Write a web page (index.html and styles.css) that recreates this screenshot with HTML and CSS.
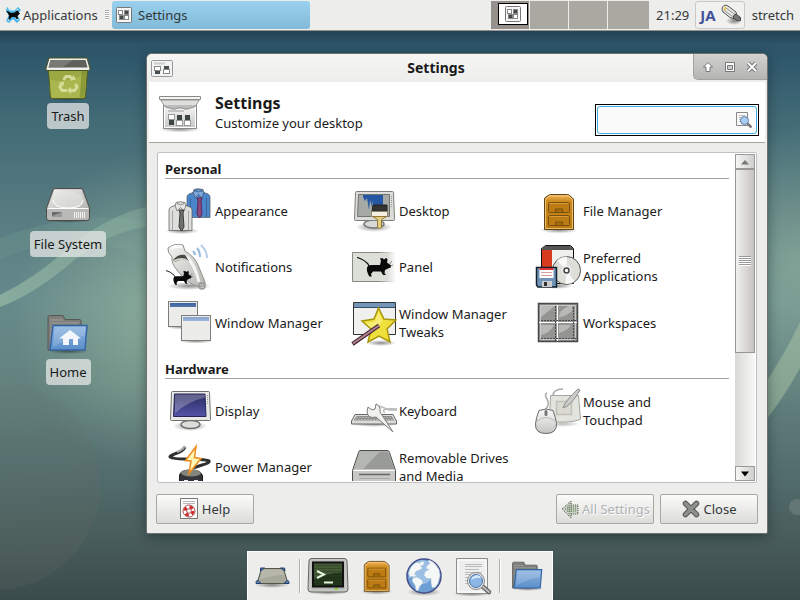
FILE: index.html
```html
<!DOCTYPE html>
<html lang="en">
<head>
<meta charset="utf-8">
<title>Settings</title>
<link rel="stylesheet" href="styles.css">
</head>
<body>
<svg class="defs" width="0" height="0" aria-hidden="true">
  <defs>
    <linearGradient id="silver" x1="0" y1="0" x2="0" y2="1"><stop offset="0" stop-color="#fafafa"/><stop offset="1" stop-color="#c4c4c2"/></linearGradient>
    <linearGradient id="metal" x1="0" y1="0" x2="1" y2="1"><stop offset="0" stop-color="#f4f4f2"/><stop offset="1" stop-color="#b4b6b0"/></linearGradient>
    <linearGradient id="blue" x1="0" y1="0" x2="0" y2="1"><stop offset="0" stop-color="#8db4e0"/><stop offset="1" stop-color="#5b8fcb"/></linearGradient>
    <linearGradient id="wood" x1="0" y1="0" x2="0" y2="1"><stop offset="0" stop-color="#f0b45c"/><stop offset=".2" stop-color="#cf8a1c"/><stop offset="1" stop-color="#bd7a12"/></linearGradient>
    <linearGradient id="screen" x1="0" y1="0" x2="0" y2="1"><stop offset="0" stop-color="#2b2b60"/><stop offset="1" stop-color="#5454a8"/></linearGradient>
    <linearGradient id="titleblue" x1="0" y1="0" x2="0" y2="1"><stop offset="0" stop-color="#3e649e"/><stop offset="1" stop-color="#9db6da"/></linearGradient>
    <radialGradient id="shade"><stop offset="0" stop-color="#000" stop-opacity=".45"/><stop offset="1" stop-color="#000" stop-opacity="0"/></radialGradient>
    <symbol id="i-folder" viewBox="0 0 48 48">
      <ellipse cx="24" cy="41" rx="21" ry="3" fill="url(#shade)"/>
      <path d="M4 40V7.500Q4 5.500 5.500 5.500H19l2 4h14.500q1.500 0 1.500 1.500V40z" fill="#7d7d7a" stroke="#565654"/>
      <path d="M6 10h13M6 13h29M6 16h5M6 19h4M6 22h4M6 25h4M6 28h3M6 31h3M6 34h3" stroke="#a2a29e"/>
      <path d="M9 15.500h34L41 40H6z" fill="url(#blue)" stroke="#3465a4" stroke-width="1.500"/>
      <path d="M10.500 17h31l-.8 9Q21 29 9 37z" fill="#fff" opacity=".16"/>
    </symbol>
    <symbol id="i-cabinet" viewBox="0 0 48 48">
      <ellipse cx="26" cy="43" rx="19" ry="3.500" fill="url(#shade)"/>
      <path d="M11.500 42.500V12q0-1 1-1.700L16 8q.7-.5 1.500-.5h17q1 0 1.700.6l3.300 2.900q1 .8 1 2v29.500z" fill="url(#wood)" stroke="#5f4415"/>
      <path d="M12.500 41.500V12.500l4-3.500h19l4 3.500v29z" fill="none" stroke="#f8d190" opacity=".75"/>
      <g fill="#bd7b14" stroke="#76500e"><rect x="15.500" y="15.500" width="21" height="10" rx="1"/><rect x="15.500" y="28.500" width="21" height="10" rx="1"/><path d="M22.500 25v-3h7v3M22.500 38v-3h7v3" fill="#a96b0c"/></g>
      <path d="M16.500 16.500h19M16.500 29.500h19" stroke="#db9a38"/>
    </symbol>
    <symbol id="i-rat" viewBox="0 0 36 21">
      <path d="M0 .5Q6 2 11 7l1 2" fill="none" stroke="#0a0a0a" stroke-width="1.200"/>
      <path d="M10.500 9.500Q11 8 14 8t9 0l1-4-1-2.500 2.500-.5 1.500 1.500L29 1l1.500 1-.5 3.500 4 3-.3 2-2.700 1-3 1.500-.5 3 1.500 2h-3l-2-3.500h-8L14 17l.8 2.500h-2.500L11 17l-1-3q-.5-3 .5-4.500z" fill="#0a0a0a"/>
      <path d="M32 8l3-4M33 9l3-1" stroke="#222" stroke-width=".5"/>
    </symbol>
    <symbol id="i-shirt" viewBox="0 0 25 31">
      <path d="M8 1.500Q12 0 17 1.500l1 3 4 1.500q2 1 2 3v20.500H1V9q0-2 2-3l4-1.500z" fill="currentColor" stroke="#555" stroke-opacity=".7"/>
      <path d="M4.500 10v19M20.500 10v19" stroke="#222" stroke-opacity=".3"/>
      <path d="M7 4l2 6 3.500-3.500L16 10l2-6M9 2.500q3.500 3 7 0" fill="#fff" fill-opacity=".28" stroke="#333" stroke-opacity=".5"/>
    </symbol>
  </defs>
</svg>

<svg class="wallpaper" viewBox="0 0 800 600" preserveAspectRatio="none" aria-hidden="true">
  <defs>
    <linearGradient id="sky" x1="0" y1="0" x2="0" y2="1">
      <stop offset="0" stop-color="#294b60"/><stop offset=".09" stop-color="#2e566b"/><stop offset=".2" stop-color="#426b76"/><stop offset=".34" stop-color="#55797f"/><stop offset=".5" stop-color="#668a8b"/><stop offset=".64" stop-color="#63827f"/><stop offset=".77" stop-color="#546f70"/><stop offset=".9" stop-color="#485c5b"/><stop offset="1" stop-color="#3a4b4c"/>
    </linearGradient>
    <radialGradient id="glow"><stop offset="0" stop-color="#a4c4a6" stop-opacity=".6"/><stop offset="1" stop-color="#9cbca2" stop-opacity="0"/></radialGradient>
    <linearGradient id="disc" x1="0" y1="0" x2="1" y2="1"><stop offset="0" stop-color="#6d7f74" stop-opacity=".1"/><stop offset="1" stop-color="#66685f" stop-opacity=".22"/></linearGradient>
    <linearGradient id="dropshade" x1="0" y1="0" x2="0" y2="1"><stop offset="0" stop-color="#123" stop-opacity=".35"/><stop offset="1" stop-color="#123" stop-opacity="0"/></linearGradient>
    <linearGradient id="ribbon"><stop offset="0" stop-color="#96bba6" stop-opacity=".7"/><stop offset="1" stop-color="#96bba6" stop-opacity=".3"/></linearGradient>
  </defs>
  <rect width="800" height="600" fill="url(#sky)"/>
  <ellipse cx="160" cy="310" rx="150" ry="160" fill="url(#glow)"/>
  <ellipse cx="800" cy="265" rx="130" ry="140" fill="url(#glow)" opacity=".8"/>
  <path d="M0 238Q80 208 147 222v40Q80 222 0 260z" fill="#90b3a4" opacity=".15"/>
  <path d="M0 295Q35 278 66 250 110 212 160 204v21Q110 228 66 267 32 295 0 307z" fill="url(#ribbon)"/>
  <path d="M740 420Q780 365 800 322v46Q780 405 750 440z" fill="#a9c4a6" opacity=".5"/>
  <circle cx="-5" cy="485" r="105" fill="url(#disc)"/>
  <circle cx="797" cy="507" r="8" fill="#8a9c98" opacity=".35"/>
  <rect y="30" width="800" height="14" fill="url(#dropshade)"/>
</svg>

<header class="panel">
  <button class="appmenu" type="button">
    <svg width="16" height="16" viewBox="0 0 16 16" aria-hidden="true"><path d="M2 0l4 3 3 1 4-4 3 3-4 4 3 6-3 3-4-4-4 4-3-2 3-6-3-4z" fill="#46b4e6"/><path d="M3 1l3 3M13 13l-3-3M13 2l-2 3M3 14l2-3" stroke="#b6e6fa" stroke-width="1.500"/><path d="M1 4q3 0 5 2l4-.5L11 4l2-.5.5 1.500L15 6.500 12.500 9l.5 3h-1.500L10 10H6.500L5 12.500H3.500L4 8.500Q3 6 1 4z" fill="#0a0a0a"/></svg>
    Applications
  </button>
  <span class="grip"></span>
  <button class="task" type="button">
    <svg width="16" height="16" viewBox="0 0 16 16" aria-hidden="true"><rect x=".5" y=".5" width="15" height="15" rx="1" fill="#f6f6f6" stroke="#777"/><g stroke="#888"><rect x="2.500" y="3.500" width="4" height="4" fill="#fff"/><rect x="8.500" y="3.500" width="4" height="4" fill="#43484a"/><rect x="3.500" y="8.500" width="4" height="4" fill="#43484a"/><rect x="8.500" y="8.500" width="4" height="4" fill="#fff"/></g></svg>
    Settings
  </button>
  <div class="pager">
    <span class="space current"><span class="mini"><svg width="16" height="16" viewBox="0 0 16 16" aria-hidden="true"><rect x=".5" y=".5" width="15" height="15" rx="1" fill="#f6f6f6" stroke="#777"/><g stroke="#888"><rect x="2.500" y="3.500" width="4" height="4" fill="#fff"/><rect x="8.500" y="3.500" width="4" height="4" fill="#43484a"/><rect x="3.500" y="8.500" width="4" height="4" fill="#43484a"/><rect x="8.500" y="8.500" width="4" height="4" fill="#fff"/></g></svg></span></span>
    <span class="space"></span><span class="space"></span><span class="space"></span>
  </div>
  <span class="clock">21:29</span>
  <div class="tray">
    <b>JA</b>
    <svg width="22" height="22" viewBox="0 0 22 22" aria-hidden="true"><ellipse cx="14" cy="17" rx="8" ry="4" fill="url(#shade)"/><path d="M2 5q0-2 2-3.500 2-1 4 .5l8 6 1 5-3 2-4-1.500L3 8q-1-1.500-1-3z" fill="#e6e6e0" stroke="#555"/><path d="M3.500 6l9 6.500M6 4l9 6.500" stroke="#999"/><path d="M13 14q0-3 3-4l4.500 3.500v3l-3 .5z" fill="#777" stroke="#444"/><path d="M4 3.500l2-1v3l-2 1z" fill="#f1c84a"/></svg>
  </div>
  <span class="user">stretch</span>
</header>

<main class="desktop">
  <nav class="shortcuts">
    <a href="#trash">
      <svg width="48" height="48" viewBox="0 0 48 48" aria-hidden="true">
        <ellipse cx="24" cy="43.500" rx="22" ry="3.500" fill="url(#shade)"/>
        <path d="M4.500 15h39l-2 27q-.2 2.500-2.500 2.500H8.500Q6.500 44.500 6.300 42z" fill="#a9b84e" stroke="#55601a"/>
        <path d="M38 17h4.500l-2 25q-.3 1.500-2 1.500h-3z" fill="#7f8d2c" opacity=".7"/><path d="M7 26Q24 30 42 19v-2H6z" fill="#7d8c30" opacity=".35"/>
        <path d="M5 4h38l3 10.500q.3 2-1.500 2H3Q1.500 16.500 2 14.500z" fill="#eef0ec" stroke="#4b5220"/>
        <path d="M6.500 6h35l2 7.500h-39z" fill="#5f605c"/><path d="M6.500 6h22l-10 7.500h-14z" fill="#858682" opacity=".7"/>
        <g fill="none" stroke="#d3dc98" stroke-width="3"><path d="M19.500 26l2.500-3.500h4l2.500 3M17.500 29l-1.500 4 2 3.500h5M27 36.500h3.500L33 33l-1.500-3"/></g><g fill="#d3dc98"><path d="M26 26.500l6-1-2.500-4.500zM20 27.500l-5 1 4.500 4zM27 33v7l-4-3.500z"/></g>
      </svg>
      <span>Trash</span>
    </a>
    <a href="#filesystem">
      <svg width="48" height="48" viewBox="0 0 48 48" aria-hidden="true">
        <ellipse cx="24" cy="38" rx="24" ry="3" fill="url(#shade)"/>
        <path d="M10 6.500h27q1.500 0 2 1.500l6.500 18v10q0 2.500-2.500 2.500H5q-2.500 0-2.500-2.500V26L9 8q.4-1.500 1-1.500z" fill="#b9b9b7" stroke="#4c4c4a"/>
        <path d="M10.500 7.500h26.500l7.500 19h-41z" fill="url(#metal)"/><path d="M9 18Q10 11 24 10t15 8-15 8T9 18z" fill="#e2e2e0" opacity=".6"/><path d="M9 18q1 8 15 8t15-8" fill="none" stroke="#fff"/>
        <path d="M3.500 26.500h41" stroke="#fff"/><path d="M8 30h10v5H8z" fill="#999"/><path d="M8 30h10l-10 4z" fill="#6a6a6a"/><path d="M30.500 30v6M32.500 30v6M34.500 30v6M36.500 30v6M38.500 30v6M40.500 30v6" stroke="#f2f2f0"/>
      </svg>
      <span>File System</span>
    </a>
    <a href="#home">
      <svg width="48" height="48" viewBox="0 0 48 48" aria-hidden="true"><use href="#i-folder"/><path d="M26 20L37 28.500h-3V35h-5v-6h-4v6h-6v-6.500h-4z" fill="#f3f7fc"/></svg>
      <span>Home</span>
    </a>
  </nav>

  <section class="window">
    <div class="titlebar">
      <svg class="menuicon" width="22" height="18" viewBox="0 0 22 18" aria-hidden="true"><rect x=".5" y=".5" width="21" height="16" rx="1" fill="#f2f2f2" stroke="#999"/><path d="M3 3.500h11" stroke="#ccc" stroke-width="2"/><g stroke="#888"><rect x="3.500" y="6.500" width="6" height="4" fill="#fff"/><path d="M4 11h5v3H4z" fill="#444c4e" stroke="none"/><rect x="12.500" y="9.500" width="6" height="4" fill="#fff"/><path d="M13 6h5v3h-5z" fill="#444c4e" stroke="none"/></g></svg>
      <h1>Settings</h1>
      <div class="controls">
        <button type="button" aria-label="Roll up"><svg width="12" height="12" viewBox="0 0 12 12"><path d="M6 1.500L10.500 6H8v4.500H4V6H1.500z" fill="#fff" stroke="#777"/></svg></button>
        <button type="button" aria-label="Maximize"><svg width="12" height="12" viewBox="0 0 12 12"><path d="M1.500 1.500h9v9h-9z" fill="#fff" stroke="#777"/><path d="M3.500 4.500h5v4h-5z" fill="#ccc" stroke="#777"/></svg></button>
        <button type="button" aria-label="Close window"><svg width="12" height="12" viewBox="0 0 12 12"><path d="M2 2l8 8M10 2l-8 8" stroke="#777" stroke-width="4"/><path d="M2 2l8 8M10 2l-8 8" stroke="#fff" stroke-width="2"/></svg></button>
      </div>
    </div>

    <div class="banner">
      <svg width="48" height="48" viewBox="0 0 48 48" aria-hidden="true">
        <ellipse cx="23" cy="41" rx="21" ry="3.500" fill="url(#shade)"/>
        <path d="M6.500 16h33v24.500h-33z" fill="url(#silver)" stroke="#8a8a88"/><path d="M7.500 17h31v22.500h-31z" fill="none" stroke="#fff"/>
        <path d="M3.500 11.500h39L38.500 18Q36 20 33 20l-2 1h-4l-1-1h-6l-1 1h-4l-2-1q-4 0-5.500-2z" fill="#bdbdbb" stroke="#8a8a88"/><path d="M5 13h36l-2 4H7z" fill="#dededc"/>
        <path d="M2.500 8.500h41v3h-41z" fill="#f4f4f2" stroke="#8a8a88"/>
        <path d="M11 23h16" stroke="#c2c2c2" stroke-width="2"/>
        <g stroke="#999" fill="#fff"><path d="M12 32h5v5h-5zM20 27h5v5h-5zM28 27h5v5h-5z" fill="#3e4446" stroke="none"/><rect x="11.500" y="26.500" width="6" height="5"/><rect x="19.500" y="32.500" width="6" height="5"/><rect x="27.500" y="32.500" width="6" height="5"/></g>
      </svg>
      <div class="heading"><h2>Settings</h2><p>Customize your desktop</p></div>
      <div class="search">
        <input type="text" aria-label="Search settings">
        <svg width="16" height="16" viewBox="0 0 16 16" aria-hidden="true"><path d="M.5.500h11v13H.5z" fill="#fafafa" stroke="#888"/><path d="M3 3.500h6M3 5.500h5M3 7.500h3M3 9.500h2" stroke="#bbb"/><path d="M11.500 11.500l4 4" stroke="#777" stroke-width="2.500"/><circle cx="8.500" cy="8.500" r="4" fill="#a9cdf2" stroke="#5d7ea8"/></svg>
      </div>
    </div>

    <div class="listframe">
      <div class="list">
        <section>
          <h3>Personal</h3>
          <div class="grid">
            <button type="button"><svg viewBox="0 0 48 48"><ellipse cx="17" cy="44" rx="17" ry="3" fill="url(#shade)"/><use href="#i-shirt" x="21" y="1" width="25" height="31" color="#4a86cc"/><path d="M32 11h5l-1 3 1 13-2.500 4-2.500-4 1-13z" fill="#8a4a80" stroke="#5c2a58"/><use href="#i-shirt" x="3" y="14" width="25" height="31" color="#dededc"/><path d="M14 23h5l-1 3 1 14-2.500 4-2.500-4 1-14z" fill="#6e726c" stroke="#3a3c38"/></svg><span>Appearance</span></button>
            <button type="button"><svg viewBox="0 0 48 48"><ellipse cx="25" cy="40" rx="18" ry="5" fill="url(#shade)"/><ellipse cx="25" cy="37" rx="10" ry="4" fill="#d8d8d6" stroke="#777" stroke-width="1.500"/><path d="M7.500 4.500h36q1 0 1 1l1 27q0 1-1 1h-38q-1 0-1-1l1-27q0-1 1-1z" fill="#dcdcda" stroke="#7c7e7a"/><path d="M9.500 7.500h31v22h-32z" fill="#a6aaa6" stroke="#70746e"/><path d="M14 8h20v11H24v-6l-1 7-2-7-1 10-2-12-2 3-2-4z" fill="#2456a4"/><path d="M42.500 9v12" stroke="#999" stroke-dasharray="1 1"/><path d="M24 18h14v7H23z" fill="#333" stroke="#222"/><path d="M22.500 24.500h16v5h-16z" fill="#f3efe2" stroke="#8c8468"/><path d="M23.500 29.500h14l-5 3v8q-2 2-4 0v-8z" fill="#e4cc84" stroke="#937a34"/></svg><span>Desktop</span></button>
            <button type="button"><svg viewBox="0 0 48 48"><use href="#i-cabinet"/></svg><span>File Manager</span></button>
            <button type="button"><svg viewBox="0 0 48 48"><ellipse cx="24" cy="43" rx="22" ry="4" fill="url(#shade)"/><path d="M3 5Q9 0 18 2l2 6q10 6 13 14l7 17q1 5-5 5-13-3-23-17Q6 20 7 14 2 9 3 5z" fill="url(#metal)" stroke="#8d8f89"/><path d="M6 5q6-3 11-1M22 14q8 8 12 25" fill="none" stroke="#fff" stroke-width="3" opacity=".8"/><path d="M8 17q5-6 12-5l4 6q-8-3-14 1z" fill="#444a42"/><path d="M9 18q8-4 14 0" stroke="#cfd1c9" fill="none" stroke-width="2"/><circle cx="37" cy="43" r="3" fill="none" stroke="#999" stroke-width="1.500"/><g fill="none" stroke="#96b8e0" stroke-width="2"><path d="M28 8q2 2 2 4"/><path d="M32 5q3 3 3 9"/><path d="M36 2q6 6 6 13" stroke="#b7cdea"/></g><use href="#i-rat" x="1" y="27" width="27" height="16"/></svg><span>Notifications</span></button>
            <button type="button"><svg viewBox="0 0 48 48"><defs><linearGradient id="fade"><stop offset=".8" stop-color="#dcded8"/><stop offset="1" stop-color="#fff"/></linearGradient><linearGradient id="fadeline"><stop offset=".6" stop-color="#888a85"/><stop offset="1" stop-color="#fff"/></linearGradient></defs><path d="M47 9.500H3.500v29H47" fill="url(#fade)" stroke="url(#fadeline)"/><use href="#i-rat" x="8" y="14" width="36" height="21"/></svg><span>Panel</span></button>
            <button type="button"><svg viewBox="0 0 48 48"><ellipse cx="24" cy="43" rx="15" ry="3" fill="url(#shade)"/><path d="M8.500 5.500l4-3h25l3 3v35h-32z" fill="#f0f0ec" stroke="#111"/><path d="M9 7h10v30H9z" fill="#d83a1e"/><path d="M9 7V5.500L12.500 3h25L40 5.500V7z" fill="#555"/><circle cx="33.500" cy="27.500" r="14" fill="#deded9" stroke="#555"/><path d="M33.500 27.500L24 17.500a14 14 0 0 1 10-4zM33.500 27.500l8 11a14 14 0 0 1-9 2.500z" fill="#fff" opacity=".8"/><circle cx="33.500" cy="27.500" r="5" fill="#eee"/><circle cx="33.500" cy="27.500" r="2.500" fill="#fff" stroke="#444" stroke-width="1.500"/><path d="M3.500 24.500h20v19.500H5L3.500 42z" fill="#6f94b8" stroke="#10202e" stroke-width="1.500"/><path d="M6.500 25h14v10h-14z" fill="#fff"/><path d="M6.500 26h14" stroke="#d33" stroke-width="2"/><path d="M8 29.500h11M8 32.500h11" stroke="#d9a0a0"/><path d="M9 38h10v6H9z" fill="#ccc"/><path d="M11 39h3v4h-3z" fill="#333"/></svg><span>Preferred Applications</span></button>
            <button type="button"><svg viewBox="0 0 48 48"><ellipse cx="18" cy="28" rx="17" ry="2.500" fill="url(#shade)"/><ellipse cx="31" cy="42" rx="17" ry="2.500" fill="url(#shade)"/><g stroke="#7b7d79"><rect x="3.500" y="2.500" width="29" height="25" fill="#ececea"/><rect x="16.500" y="16.500" width="29" height="25" fill="#ececea"/></g><path d="M5 4h26v4H5zM18 18h26v4H18z" fill="url(#titleblue)"/></svg><span>Window Manager</span></button>
            <button type="button"><svg viewBox="0 0 48 48"><ellipse cx="32" cy="44" rx="15" ry="3" fill="url(#shade)"/><path d="M4.500 3.500h42v32h-42z" fill="#f0f0ee" stroke="#333"/><path d="M5 4h41v4H5z" fill="#7595b8"/><path d="M5 8.500h41" stroke="#3a4f68"/><path d="M29.500 9l5.500 11 12 1-9 9 3 13-11-6-11 6 3-13-9-8 12-2z" fill="#f0e03e" stroke="#a8960c" stroke-width="1.500"/><path d="M29.500 13l4 9-8 10-9-8 9-1z" fill="#fbf59a" opacity=".6"/><path d="M3.500 45L30 26.500" stroke="#432a36" stroke-width="4"/><path d="M4 44.500L30 26.500" stroke="#b58090" stroke-width="2"/></svg><span>Window Manager Tweaks</span></button>
            <button type="button"><svg viewBox="0 0 48 48"><path d="M5.500 4.500h39v38h-39z" fill="#949492" stroke="#484a4a" stroke-width="1.500"/><path d="M7.500 6.500h35v34h-35z" fill="none" stroke="#c9c9c7"/><path d="M8 7h14L8 18zM26 18q0-7 10-11h3v5Q32 18 26 18zM8 36V26h13Q17 34 8 36zM26 34v-8h12Q34 32 26 34z" fill="#b9b9b7"/><path d="M24.500 6v36M6 23.500h38" stroke="#fff"/><path d="M22.500 7v35M8 21.500h35M8 39.500h35M40.500 8v34" stroke="#4a4a4a" stroke-dasharray="2 1"/></svg><span>Workspaces</span></button>
          </div>
        </section>
        <section>
          <h3>Hardware</h3>
          <div class="grid">
            <button type="button"><svg viewBox="0 0 48 48"><ellipse cx="25" cy="39" rx="17" ry="5" fill="url(#shade)"/><path d="M21 33h9v4h-9z" fill="#bbb"/><ellipse cx="25.500" cy="37.500" rx="9.500" ry="4" fill="#dcdcda" stroke="#6e706c" stroke-width="1.500"/><path d="M7.500 4.500h36q1 0 1 1l1 27q0 1-1 1h-38q-1 0-1-1l1-27q0-1 1-1z" fill="#e8e8e6" stroke="#70726e"/><path d="M9.500 7h30.500l1 22.500H8.500z" fill="url(#screen)" stroke="#25255a"/><path d="M10 7.500h30v3Q24 14 10 26z" fill="#fff" opacity=".25"/><path d="M42.500 8v10" stroke="#999" stroke-dasharray="1 1"/></svg><span>Display</span></button>
            <button type="button"><svg viewBox="0 0 48 48"><ellipse cx="25" cy="37" rx="24" ry="3" fill="url(#shade)"/><path d="M6 27.500h38l3.500 6.500v3h-45v-3z" fill="#dcdcda" stroke="#666864"/><path d="M7.500 29h35l3 4.500h-41z" fill="#8e908c"/><path d="M7 30.500h36M6 32.500h38" stroke="#b4b4b2" stroke-dasharray="2 1"/><path d="M30 19q6 2 10 4h8M36 26q-6-5 12-4" fill="none" stroke="#bbb" stroke-width="1.500"/><path d="M19 20l4 3 3-1 1-5q5 2 4 8l13 20-17-15q-8 2-9-5z" fill="#f0f0ee" stroke="#7c7e7a"/></svg><span>Keyboard</span></button>
            <button type="button"><svg viewBox="0 0 48 48"><ellipse cx="30" cy="37" rx="17" ry="3" fill="url(#shade)" opacity=".6"/><path d="M13 22q4-5 1-10t0-6M20 9q0-7 10-7" fill="none" stroke="#aaa" stroke-width="1.500"/><path d="M17.500 8.500h28l2 24q-12 4-31 2z" fill="#e4e4de" stroke="#a4a69f"/><path d="M23.500 14.500h15v13h-15z" fill="#dadad2" stroke="#bfc0b8" stroke-width="1.500"/><path d="M30 21Q32 14 45 2l2 1Q38 19 30 21z" fill="#ccc" stroke="#8b8d88"/><path d="M6 23.500q7-3 14 0 3 8 3.500 13Q24 46.500 13 46.500T2.500 37Q3 31 6 23.500z" fill="url(#silver)" stroke="#6a6c68"/><path d="M4 34Q13 27 22 34" fill="none" stroke="#bbb"/><rect x="11.500" y="23" width="3" height="6" rx="1.500" fill="#777"/></svg><span>Mouse and Touchpad</span></button>
            <button type="button"><svg viewBox="0 0 48 48"><path d="M20 4q-2 4-8 6-8 3-7 4 4 2 14 2 20 0 25 2 1 2-7 4l-9 3" fill="none" stroke="#2c302e" stroke-width="3"/><path d="M20 3q-2 4-8 6" fill="none" stroke="#aaa" stroke-width="2"/><path d="M14.500 40v-7q0-6 11-6t12 6v15h-23z" fill="#33353a" stroke="#191919"/><ellipse cx="26" cy="30" rx="10" ry="3.500" fill="#83857c"/><path d="M19 37h4v3h-4zM29 37h4v3h-4z" fill="#eee"/><path d="M31 3.500L20.500 17.500l5.500.5L24 30.500l12-15-6.500-1z" fill="#fff5b4" stroke="#f08c1c" stroke-width="1.500"/></svg><span>Power Manager</span></button>
            <button type="button"><svg viewBox="0 0 48 48"><path d="M11 7.500h27q2 0 2.500 2l6 18V46h-43V27.500l6-18q.5-2 1.500-2z" fill="#c8c8c6" stroke="#4c4e4a"/><path d="M11 8.500h28l6.500 17.500h-41z" fill="#999b98"/><path d="M11 8.500h20L14 26H5z" fill="#b4b6b2"/><path d="M4.500 27.500h41" stroke="#fff"/><path d="M10 31.500h31" stroke="#666" stroke-width="1.500"/><path d="M10 35.500h31" stroke="#aaa"/></svg><span>Removable Drives and Media</span></button>
          </div>
        </section>
      </div>
      <div class="scrollbar">
        <button type="button" class="step" aria-label="Scroll up"><svg width="10" height="6" viewBox="0 0 10 6"><path d="M1 5.500h8L5 1z" fill="#777"/></svg></button>
        <div class="track"><div class="thumb"><i></i></div></div>
        <button type="button" class="step" aria-label="Scroll down"><svg width="10" height="6" viewBox="0 0 10 6"><path d="M1 .500h8L5 5.500z" fill="#000"/></svg></button>
      </div>
    </div>

    <div class="actions">
      <button type="button"><svg width="18" height="22" viewBox="0 0 18 22" aria-hidden="true"><path d="M.5.500h17v20H.5z" fill="#fafaf8" stroke="#777"/><path d="M3 3.500h12M3 5.500h12" stroke="#bbb"/><circle cx="9" cy="13" r="4" fill="none" stroke="#fff" stroke-width="4"/><circle cx="9" cy="13" r="4" fill="none" stroke="#d42a2a" stroke-width="3" stroke-dasharray="3.300 3"/><circle cx="9" cy="13" r="6" fill="none" stroke="#a55"/><circle cx="9" cy="13" r="2.300" fill="none" stroke="#a55"/></svg>Help</button>
      <button type="button" class="back" disabled><svg width="20" height="20" viewBox="0 0 20 20" aria-hidden="true"><path d="M2 10l9-8v4h7v9h-7v4z" fill="#c9cfc6"/><path d="M2 10l9-8v4h7v9h-7v4z" fill="none" stroke="#4a5a46" stroke-dasharray="1 1"/><path d="M5 10h12M7 8h10M7 12h10M9 6v9M11 4v13" stroke="#5e7c50" stroke-dasharray="1 1"/></svg>All Settings</button>
      <button type="button"><svg width="18" height="18" viewBox="0 0 18 18" aria-hidden="true"><path d="M3.500 3.500l11 11M14.500 3.500l-11 11" stroke="#555753" stroke-width="5.500" stroke-linecap="round"/><path d="M3.500 3.500l11 11M14.500 3.500l-11 11" stroke="#8e908d" stroke-width="3.500" stroke-linecap="round"/></svg>Close</button>
    </div>
  </section>
</main>

<footer class="dock">
  <button type="button" aria-label="Show desktop"><svg viewBox="0 0 48 48"><ellipse cx="24" cy="33" rx="18" ry="3" fill="url(#shade)"/><path d="M13.500 16.500h22l4.500 15H9z" fill="#a6a898" stroke="#55574c"/><path d="M14 17.500h21l1.500 5.500q-14 0-25 5z" fill="#fff" opacity=".18"/><g fill="#5a7fb4" stroke="#24406c"><path d="M12.500 16h4l-4 3zM32.500 16h4l.5 3zM9.500 28l3.500 3.500H8q-.5-2 1.500-3.500zM39.500 28L36 31.500h5q.5-2-1.500-3.500z"/></g></svg></button>
  <span class="sep"></span>
  <button type="button" aria-label="Terminal"><svg viewBox="0 0 48 48"><ellipse cx="24" cy="40" rx="21" ry="3" fill="url(#shade)"/><path d="M8 6.500h32q3 0 3 2.500l1 28q0 3-3 3H7q-3 0-3-3L5 9q0-2.500 3-2.500z" fill="#c6c8c4" stroke="#666"/><path d="M7.500 8.500h33v29h-33z" fill="#a4a6a2" opacity=".5"/><path d="M9 10.500h30v24H9z" fill="#23371c" stroke="#111" stroke-width="2"/><path d="M10 11.500h28v9Q24 21 10 27z" fill="#6d8658" opacity=".45"/><path d="M10 13.500h28M10 16.500h28M10 19.500h28M10 22.500h28M10 25.500h28M10 28.500h28M10 31.500h28" stroke="#1a2a14" opacity=".3"/><path d="M13 19l7 3.500-7 3.500M20 30.500h9" fill="none" stroke="#e4f4da" stroke-width="2"/><path d="M31 37h3" stroke="#8c3" stroke-width="2"/></svg></button>
  <button type="button" aria-label="File manager"><svg viewBox="0 0 48 48"><use href="#i-cabinet" x="1" y="3" width="44" height="41"/></svg></button>
  <button type="button" aria-label="Web browser"><svg viewBox="0 0 48 48"><ellipse cx="24" cy="40" rx="17" ry="4" fill="url(#shade)"/><circle cx="24" cy="24" r="17" fill="#6d9ed4" stroke="#44508c" stroke-width="1.500"/><ellipse cx="22" cy="20" rx="11" ry="12" fill="#b9d3ee" opacity=".6"/><path d="M8.500 21q2-8 8-10.500l3 .5 2-1.500 3 .5-1 3-3 1 2 2-3 2-3 1-2 3 2 2-3 1-2-1-1.500 2zM13 26l4-1 5 3 1 3-3 3-2 5-2-1-1-5-3-4zM29 8l4 2 3 3 3 4.500 1 6-2 8-3 4-3 0-1-5 0-4-4 0-3-3 1-4 4-2-3-1 1-3 3-2-2-2z" fill="#f6f8f8" stroke="#a9bed4" stroke-width=".5"/></svg></button>
  <button type="button" aria-label="Application finder"><svg viewBox="0 0 48 48"><ellipse cx="24" cy="42" rx="19" ry="2.500" fill="url(#shade)"/><path d="M8.500 6.500h31v35h-31z" fill="#eee" stroke="#8c8e8a"/><path d="M10 8h28v32H10z" fill="none" stroke="#fff"/><path d="M17 12.500h17M17 14.500h17M17 17.500h14M17 20.500h17M17 22.500h14M17 25.500h8M17 28.500h7M17 31.500h8" stroke="#bbb"/><path d="M34 34l7 6" stroke="#666" stroke-width="4.500" stroke-linecap="round"/><path d="M34 34l7 6" stroke="#bbb" stroke-width="2" stroke-linecap="round"/><circle cx="28" cy="29" r="8.500" fill="#e8e8e8" stroke="#888"/><circle cx="28" cy="29" r="6.500" fill="#8db6e6" stroke="#4a74ac"/><path d="M23 28q1-4 6-5 4 1 4 3-5-1-10 2z" fill="#d6e7f8"/></svg></button>
  <span class="sep"></span>
  <button type="button" aria-label="Folder"><svg viewBox="0 0 48 48"><use href="#i-folder" x="5" y="6" width="37" height="36"/></svg></button>
</footer>
</body>
</html>
```

FILE: styles.css
```css
* { box-sizing: border-box; }

body {
  margin: 0;
  height: 100vh;
  overflow: hidden;
  display: flex;
  flex-direction: column;
  background: #4b6568;
  color: #1a1a1a;
  font: 13px/18px "Noto Sans", sans-serif;
}

h1, h2, h3, p { margin: 0; }
svg { display: block; flex: none; }

button {
  margin: 0;
  padding: 0;
  border: 0;
  background: none;
  color: inherit;
  font: inherit;
}

.defs { position: absolute; }

.wallpaper {
  position: absolute;
  inset: 0;
  z-index: -1;
  width: 100%;
  height: 100%;
}

/* Top panel */
.panel {
  display: flex;
  align-items: center;
  flex: none;
  height: 31px;
  border-bottom: 1px solid #9a958c;
  background: #ededeb;
  color: #33393b;
}

.appmenu {
  display: flex;
  align-items: center;
  gap: 2px;
  width: 105px;
  padding-left: 5px;
}

.grip {
  width: 4px;
  height: 10px;
  margin-right: 3px;
  background: repeating-linear-gradient(#aaa 0 1px, #fff 1px 2px);
}

.task {
  display: flex;
  align-items: center;
  gap: 6px;
  width: 198px;
  height: 28px;
  padding-left: 4px;
  border-radius: 3px;
  background: linear-gradient(#99d0ee, #82bbd8);
}

.pager {
  display: flex;
  gap: 1px;
  height: 28px;
  margin-left: auto;
}

.space {
  width: 38px;
  background: #a9a9a1;
}

.space:last-child { width: 41px; }

.current {
  display: flex;
  justify-content: flex-end;
  padding: 2px 1px 0 0;
  background: #96918d;
}

.mini {
  display: flex;
  align-items: center;
  justify-content: center;
  width: 30px;
  height: 22px;
  border: 1px solid #000;
  background: #fff;
}

.clock { margin: 0 6px 0 7px; }

.tray {
  display: flex;
  align-items: center;
  gap: 4px;
  height: 28px;
  padding: 0 2px 0 4px;
  border: 1px solid #c9c9cb;
  border-radius: 3px;
  background: #f1f1ef;
}

.tray b {
  color: #44529a;
  font: bold 15px/18px "Noto Sans", sans-serif;
}

.user { margin: 0 6px 0 7px; }

/* Desktop */
.desktop {
  display: flex;
  flex: 1;
  min-height: 0;
}

.shortcuts {
  display: flex;
  flex-direction: column;
  gap: 53px;
  flex: none;
  width: 136px;
  margin-right: 10px;
  padding-top: 23px;
}

.shortcuts a {
  display: flex;
  flex-direction: column;
  align-items: center;
  gap: 1px;
  color: #1a1a1a;
  text-decoration: none;
}

.shortcuts span {
  padding: 4px;
  border-radius: 4px;
  background: rgba(238, 238, 236, .7);
}

/* Window */
.window {
  display: flex;
  flex-direction: column;
  flex: 1;
  min-width: 0;
  margin: 22px 32px 17px 0;
  padding: 0 2px 9px;
  border: 1px solid #6e716e;
  border-radius: 6px 6px 2px 2px;
  background: #ededeb;
  box-shadow: 0 3px 12px rgba(0, 20, 20, .4);
}

.titlebar {
  display: flex;
  align-items: center;
  justify-content: space-between;
  flex: none;
  height: 28px;
  margin: 0 -2px;
  border-radius: 5px 5px 0 0;
  background: linear-gradient(#f6f6f5, #ededeb);
}

.menuicon { margin: 1px 6px 0 4px; }
.titlebar h1 { font-size: 14px; line-height: 18px; }

.controls {
  display: flex;
  align-items: center;
  justify-content: center;
  gap: 10px;
  align-self: flex-start;
  width: 74px;
  height: 26px;
  border: 1px solid #a3a3a1;
  border-width: 0 0 1px 1px;
  border-radius: 0 5px 0 5px;
  background: linear-gradient(#d2d2d0, #b4b4b2);
}

.banner {
  display: flex;
  align-items: center;
  flex: none;
  height: 61px;
  padding: 0 6px 0 8px;
  border-bottom: 1px solid #a5a59d;
  background: #fff;
}

.heading {
  flex: 1;
  margin-left: 10px;
}

.heading h2 { font-size: 16px; line-height: 22px; }

.search {
  position: relative;
  width: 164px;
  margin-top: 16px;
  padding: 1px;
  border: 1px solid #000;
}

.search input {
  display: block;
  width: 100%;
  height: 28px;
  padding: 4px 24px 4px 6px;
  border: 1px solid #3daee2;
  border-radius: 3px;
  outline: 0;
  background: #fbfbfb;
  font: inherit;
}

.search svg {
  position: absolute;
  top: 7px;
  right: 6px;
}

.listframe {
  display: flex;
  flex: 1;
  min-height: 0;
  margin: 9px 8px 0;
  padding: 1px;
  border: 1px solid #bfc1c5;
  border-radius: 2px;
  background: #fff;
}

.list {
  flex: 1;
  overflow: hidden;
  padding: 6px 6px 0;
}

.list h3 {
  border-bottom: 1px solid #a5a5a1;
  font-size: 13px;
  line-height: 18px;
}

.list section + section { margin-top: 9px; }

.grid {
  display: grid;
  grid-template-columns: repeat(auto-fill, 184px);
  grid-auto-rows: 56px;
  margin-right: -6px;
  padding-top: 4px;
}

.grid button {
  display: flex;
  align-items: center;
  gap: 2px;
  text-align: left;
}

.grid svg, .dock svg { width: 48px; height: 48px; }
.grid span { max-width: 120px; }

.scrollbar {
  display: flex;
  flex-direction: column;
  flex: none;
  width: 20px;
}

.step {
  display: flex;
  align-items: center;
  justify-content: center;
  height: 15px;
  border: 1px solid #9a9a98;
  background: linear-gradient(90deg, #f6f6f4, #cfcfcd);
}

.track {
  flex: 1;
  background: linear-gradient(90deg, #d8d8d4, #f8f8f6);
}

.thumb {
  display: flex;
  align-items: center;
  justify-content: center;
  height: 62%;
  border: 1px solid #9a9692;
  background: linear-gradient(90deg, #f0f0ee, #c6c4c2);
}

.thumb i {
  width: 12px;
  height: 10px;
  background: repeating-linear-gradient(#999 0 1px, #fff 1px 2px);
}

.actions {
  display: flex;
  gap: 6px;
  flex: none;
  margin: 11px 7px 0;
}

.actions button {
  display: flex;
  align-items: center;
  justify-content: center;
  gap: 4px;
  width: 98px;
  height: 30px;
  border: 1px solid #a6a8a2;
  border-radius: 2px;
  background: linear-gradient(#fbfbfa, #dcdcd9);
  color: #33393b;
}

.actions .back {
  gap: 2px;
  margin-left: auto;
  color: #b0b3b5;
  text-shadow: 1px 1px #fff;
}

/* Bottom launcher */
.dock {
  display: flex;
  align-items: center;
  align-self: center;
  flex: none;
  height: 49px;
  border: 1px solid #fff;
  border-bottom: 0;
  background: #ededeb;
}

.dock button { width: 48px; }

.sep {
  width: 2px;
  height: 34px;
  margin: 0 3px;
  border-left: 1px solid #b0b0ae;
  border-right: 1px solid #fff;
}
```
